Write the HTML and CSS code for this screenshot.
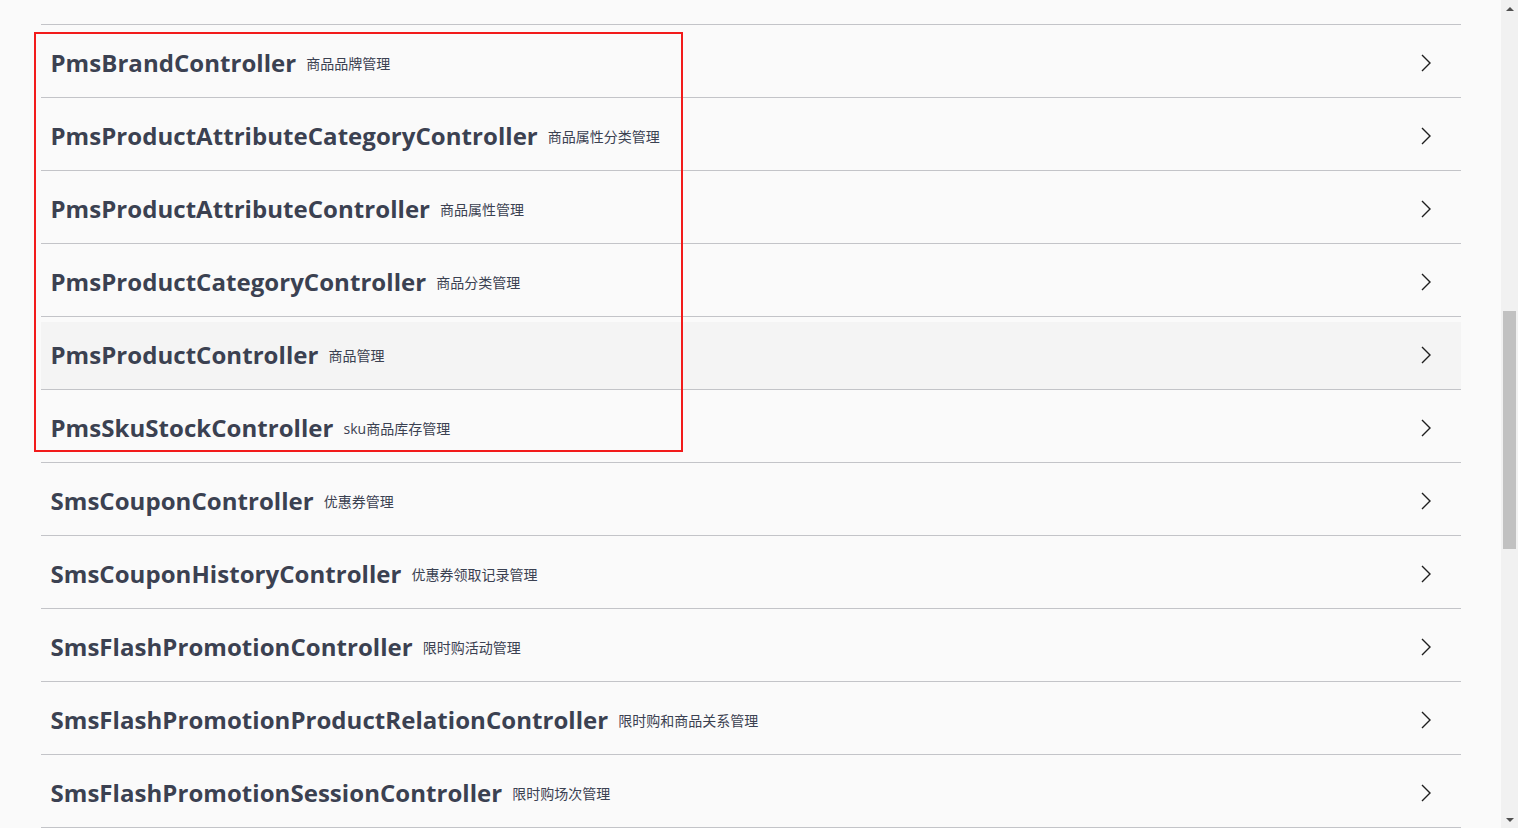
FILE: index.html
```html
<!DOCTYPE html>
<html>
	<head>
		<meta charset="UTF-8">
		<title>mall-admin API</title>
		<link rel="stylesheet" href="styles.css">
	</head>
	<body>
		<div class="page">
			<div class="wrapper">
				<div class="tags">
					<div class="tag-section">
						<h4 class="tag"><span class="tag-name">OssController</span><small class="tag-desc">Oss管理</small><svg class="arrow" viewBox="0 0 12 18"><polyline points="2,1 10,9 2,17"/></svg></h4>
					</div>
					<div class="tag-section">
						<h4 class="tag"><span class="tag-name">PmsBrandController</span><small class="tag-desc">商品品牌管理</small><svg class="arrow" viewBox="0 0 12 18"><polyline points="2,1 10,9 2,17"/></svg></h4>
					</div>
					<div class="tag-section">
						<h4 class="tag"><span class="tag-name">PmsProductAttributeCategoryController</span><small class="tag-desc">商品属性分类管理</small><svg class="arrow" viewBox="0 0 12 18"><polyline points="2,1 10,9 2,17"/></svg></h4>
					</div>
					<div class="tag-section">
						<h4 class="tag"><span class="tag-name">PmsProductAttributeController</span><small class="tag-desc">商品属性管理</small><svg class="arrow" viewBox="0 0 12 18"><polyline points="2,1 10,9 2,17"/></svg></h4>
					</div>
					<div class="tag-section">
						<h4 class="tag"><span class="tag-name">PmsProductCategoryController</span><small class="tag-desc">商品分类管理</small><svg class="arrow" viewBox="0 0 12 18"><polyline points="2,1 10,9 2,17"/></svg></h4>
					</div>
					<div class="tag-section">
						<h4 class="tag hover"><span class="tag-name">PmsProductController</span><small class="tag-desc">商品管理</small><svg class="arrow" viewBox="0 0 12 18"><polyline points="2,1 10,9 2,17"/></svg></h4>
					</div>
					<div class="tag-section">
						<h4 class="tag"><span class="tag-name">PmsSkuStockController</span><small class="tag-desc">sku商品库存管理</small><svg class="arrow" viewBox="0 0 12 18"><polyline points="2,1 10,9 2,17"/></svg></h4>
					</div>
					<div class="tag-section">
						<h4 class="tag"><span class="tag-name">SmsCouponController</span><small class="tag-desc">优惠券管理</small><svg class="arrow" viewBox="0 0 12 18"><polyline points="2,1 10,9 2,17"/></svg></h4>
					</div>
					<div class="tag-section">
						<h4 class="tag"><span class="tag-name">SmsCouponHistoryController</span><small class="tag-desc">优惠券领取记录管理</small><svg class="arrow" viewBox="0 0 12 18"><polyline points="2,1 10,9 2,17"/></svg></h4>
					</div>
					<div class="tag-section">
						<h4 class="tag"><span class="tag-name">SmsFlashPromotionController</span><small class="tag-desc">限时购活动管理</small><svg class="arrow" viewBox="0 0 12 18"><polyline points="2,1 10,9 2,17"/></svg></h4>
					</div>
					<div class="tag-section">
						<h4 class="tag"><span class="tag-name">SmsFlashPromotionProductRelationController</span><small class="tag-desc">限时购和商品关系管理</small><svg class="arrow" viewBox="0 0 12 18"><polyline points="2,1 10,9 2,17"/></svg></h4>
					</div>
					<div class="tag-section">
						<h4 class="tag"><span class="tag-name">SmsFlashPromotionSessionController</span><small class="tag-desc">限时购场次管理</small><svg class="arrow" viewBox="0 0 12 18"><polyline points="2,1 10,9 2,17"/></svg></h4>
					</div>
				</div>
			</div>
			<div class="mark"></div>
		</div>
		<div class="scrollbar">
			<div class="sb-btn"><span class="tri-up"></span></div>
			<div class="sb-track"><div class="sb-thumb"></div></div>
			<div class="sb-btn"><span class="tri-down"></span></div>
		</div>
	</body>
</html>
```

FILE: styles.css
```css
*{
    margin: 0;
    padding: 0;
    box-sizing: border-box;
}
html,body{
    height: 100%;
}
body{
    display: flex;
    overflow: hidden;
    background: #fafafa;
    color: #3b4151;
    font-family: "Open Sans", "Noto Sans CJK SC", sans-serif;
}
.page{
    position: relative;
    flex: 1;
    overflow: hidden;
}
.wrapper{
    width: 1460px;
    margin: 0 auto;
    padding: 0 20px;
}
.tags{
    margin-top: -43px;
}
.tag{
    display: flex;
    align-items: center;
    height: 68px;
    margin: 0 0 5px;
    padding: 8px 29px 10px 10px;
    border-bottom: 1px solid #c3c4c8;
    font-size: 24px;
    font-weight: 700;
    letter-spacing: 0.05px;
}
.tag.hover{
    background: #f4f4f4;
}
.tag-name{
    white-space: nowrap;
}
.tag-desc{
    flex: 1;
    padding: 0 10px;
    font-size: 14px;
    font-weight: normal;
    letter-spacing: 0;
}
.arrow{
    width: 12px;
    height: 18px;
    fill: none;
    stroke: #1e1e1e;
    stroke-width: 1.4;
}
.mark{
    position: absolute;
    left: 34px;
    top: 32px;
    width: 649px;
    height: 420px;
    border: 2px solid #f21b1b;
}
.scrollbar{
    display: flex;
    flex-direction: column;
    width: 17px;
    background: #f1f1f1;
}
.sb-btn{
    height: 17px;
    display: flex;
    align-items: center;
    justify-content: center;
}
.tri-up{
    border-left: 4px solid transparent;
    border-right: 4px solid transparent;
    border-bottom: 4px solid #505050;
}
.tri-down{
    border-left: 4px solid transparent;
    border-right: 4px solid transparent;
    border-top: 4px solid #505050;
}
.sb-track{
    flex: 1;
    padding: 294px 2px 0;
}
.sb-thumb{
    height: 238px;
    background: #c1c1c1;
}
```
